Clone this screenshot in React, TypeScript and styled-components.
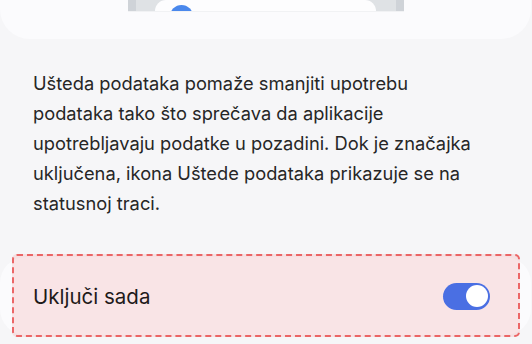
import React from "react";
import styled, { createGlobalStyle } from "styled-components";

const Global = createGlobalStyle`
  html, body { margin: 0; padding: 0; background: #f6f6f8; }
  body { font-family: Inter, Roboto, "Noto Sans", "Liberation Sans", sans-serif; }
`;

const Page = styled.div`
  width: 532px;
  height: 344px;
  overflow: hidden;
  background: #f6f6f8;
  display: flex;
  flex-direction: column;
`;

const TopCard = styled.div`
  width: 531px;
  height: 39px;
  flex-shrink: 0;
  background: #fbfbfd;
  border-radius: 0 0 30px 30px;
  display: flex;
  justify-content: center;
  padding-left: 1px;
  box-sizing: border-box;
`;

const Phone = styled.div`
  width: 276px;
  height: 11px;
  display: flex;
  overflow: hidden;
  border-bottom: 1px solid #f1f2f4;
`;

const FrameEdge = styled.div<{ $dark?: boolean; $w: number }>`
  width: ${(p) => p.$w}px;
  background: ${(p) => (p.$dark ? "#cfd3d8" : "#dfe2e5")};
`;

const Screen = styled.div`
  flex: 1;
  background: #dfe2e5;
`;

const ScreenInner = styled.div`
  height: 100%;
  background: #fdfdfe;
  border-radius: 12px 12px 0 0;
  padding-left: 15px;
  padding-top: 5px;
  box-sizing: border-box;
`;

const Dot = styled.div`
  width: 23px;
  height: 23px;
  border-radius: 50%;
  background: #4a88ec;
`;

const Description = styled.p`
  margin: 29px 0 0;
  padding: 0 20px 0 33px;
  font-size: 18.3px;
  line-height: 30px;
  color: #262626;
  flex-shrink: 0;
`;

const Line = styled.span`
  display: block;
  white-space: nowrap;
`;

const ToggleCard = styled.div`
  position: relative;
  margin-top: 39px;
  width: 531px;
  height: 78px;
  flex-shrink: 0;
  background: #fbfbfd;
  border-radius: 26px;
  display: flex;
  align-items: center;
  justify-content: space-between;
  padding: 0 41px 0 33px;
  box-sizing: border-box;
`;

const Highlight = styled.div`
  position: absolute;
  left: 12px;
  right: 11px;
  top: -3px;
  bottom: -2px;
  border: 2px dashed rgba(232, 60, 60, 0.75);
  border-radius: 5px;
  background: rgba(240, 80, 80, 0.13);
  pointer-events: none;
`;

const Label = styled.span`
  font-size: 20.5px;
  color: #1f1a1a;
  position: relative;
`;

const Track = styled.div<{ $on: boolean }>`
  position: relative;
  width: 47px;
  height: 27px;
  border-radius: 14px;
  background: ${(p) => (p.$on ? "#4a6fe3" : "#c4c4c8")};
  display: flex;
  align-items: center;
  justify-content: ${(p) => (p.$on ? "flex-end" : "flex-start")};
  padding: 0 2px;
  box-sizing: border-box;
`;

const Thumb = styled.div`
  width: 22px;
  height: 22px;
  border-radius: 50%;
  background: #ffffff;
`;

const lines = [
  "Ušteda podataka pomaže smanjiti upotrebu",
  "podataka tako što sprečava da aplikacije",
  "upotrebljavaju podatke u pozadini. Dok je značajka",
  "uključena, ikona Uštede podataka prikazuje se na",
  "statusnoj traci.",
];

export default function App() {
  return (
    <Page>
      <Global />
      <TopCard>
        <Phone>
          <FrameEdge $dark $w={8} />
          <FrameEdge $w={19} />
          <Screen>
            <ScreenInner>
              <Dot />
            </ScreenInner>
          </Screen>
          <FrameEdge $w={20} />
          <FrameEdge $dark $w={8} />
        </Phone>
      </TopCard>
      <Description>
        {lines.map((l) => (
          <Line key={l}>{l}</Line>
        ))}
      </Description>
      <ToggleCard>
        <Highlight />
        <Label>Uključi sada</Label>
        <Track $on>
          <Thumb />
        </Track>
      </ToggleCard>
    </Page>
  );
}
